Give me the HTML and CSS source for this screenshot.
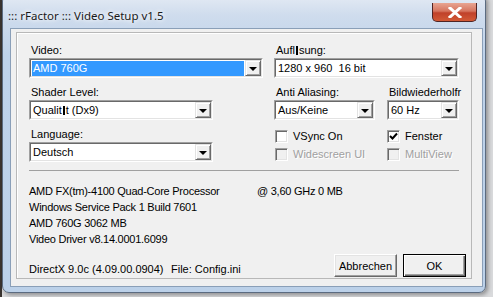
FILE: index.html
```html
<!DOCTYPE html>
<html>
<head>
    <title>rFactor Video Setup</title>
    <link rel="stylesheet" href="styles.css">
</head>
<body>
    <div class="window">
        <div class="titlebar">
            <span class="title">::: rFactor ::: Video Setup v1.5</span>
            <div class="close">
                <svg width="14" height="11" viewBox="0 0 14 11">
                    <path d="M2 1 L12 10 M12 1 L2 10" stroke="#fff" stroke-width="3" stroke-linecap="square"/>
                </svg>
            </div>
        </div>
        <div class="client">
            <div class="group">
                <div class="settings">
                    <div class="column">
                        <div class="field">
                            <div class="label">Video:</div>
                            <div class="combo">
                                <div class="combo-inner">
                                    <div class="value selected">AMD 760G</div>
                                    <div class="drop"><span class="arrow"></span></div>
                                </div>
                            </div>
                        </div>
                        <div class="field shader">
                            <div class="label">Shader Level:</div>
                            <div class="combo">
                                <div class="combo-inner">
                                    <div class="value">Qualit<span class="bad-char"></span>t (Dx9)</div>
                                    <div class="drop"><span class="arrow"></span></div>
                                </div>
                            </div>
                        </div>
                        <div class="field shader">
                            <div class="label">Language:</div>
                            <div class="combo">
                                <div class="combo-inner">
                                    <div class="value">Deutsch</div>
                                    <div class="drop"><span class="arrow"></span></div>
                                </div>
                            </div>
                        </div>
                    </div>
                    <div class="column">
                        <div class="field">
                            <div class="label">Aufl<span class="bad-char"></span>sung:</div>
                            <div class="combo">
                                <div class="combo-inner">
                                    <div class="value">1280 x 960&nbsp; 16 bit</div>
                                    <div class="drop"><span class="arrow"></span></div>
                                </div>
                            </div>
                        </div>
                        <div class="pair">
                            <div class="field aa">
                                <div class="label">Anti Aliasing:</div>
                                <div class="combo">
                                    <div class="combo-inner">
                                        <div class="value">Aus/Keine</div>
                                        <div class="drop"><span class="arrow"></span></div>
                                    </div>
                                </div>
                            </div>
                            <div class="field hz">
                                <div class="label">Bildwiederholfr</div>
                                <div class="combo">
                                    <div class="combo-inner">
                                        <div class="value">60 Hz</div>
                                        <div class="drop"><span class="arrow"></span></div>
                                    </div>
                                </div>
                            </div>
                        </div>
                        <div class="checks">
                            <div class="check"><span class="box"></span>VSync On</div>
                            <div class="check"><span class="box">
                                <svg width="9" height="9" viewBox="0 0 9 9"><path d="M1 4 L3.5 6.5 L8 1.5" stroke="#000" stroke-width="2" fill="none"/></svg>
                            </span>Fenster</div>
                            <div class="check disabled"><span class="box"></span>Widescreen UI</div>
                            <div class="check disabled"><span class="box"></span>MultiView</div>
                        </div>
                    </div>
                </div>
                <div class="separator"></div>
                <div class="info">
                    <span>AMD FX(tm)-4100 Quad-Core Processor</span><span>@ 3,60 GHz 0 MB</span>
                    <span>Windows Service Pack 1 Build 7601</span><span></span>
                    <span>AMD 760G 3062 MB</span><span></span>
                    <span>Video Driver v8.14.0001.6099</span><span></span>
                </div>
                <div class="footer">
                    <span class="dx">DirectX 9.0c (4.09.00.0904)</span>
                    <span class="file">File: Config.ini</span>
                    <div class="buttons">
                        <div class="button">Abbrechen</div>
                        <div class="button button-default"><span>OK</span></div>
                    </div>
                </div>
            </div>
        </div>
    </div>
</body>
</html>
```

FILE: styles.css
```css
body {
    margin: 0;
    height: 297px;
    overflow: hidden;
    background: linear-gradient(90deg, #3a3430 0, #3a3430 2px, #d9dadc 2px);
    font-family: 'Liberation Sans', Arial, sans-serif;
    font-size: 11px;
    color: #000;
}
.window {
    margin: -6px 0 0 2px;
    width: 484px;
    height: 299px;
    box-sizing: border-box;
    padding: 0 4px 0 7px;
    background: linear-gradient(180deg, #e4ebf4 0, #cfdced 20px, #bed2ea 60px, #bcd1e9 100%);
    border: 1px solid #5b6b80;
    border-radius: 7px;
    box-shadow: 2px 2px 4px rgba(0, 0, 0, 0.35);
}
.titlebar {
    height: 33px;
    display: flex;
    justify-content: space-between;
    align-items: flex-start;
}
.title {
    font-family: 'Noto Sans', sans-serif;
    font-size: 11.5px;
    margin-top: 13px;
    margin-left: -2px;
    color: #1a1a1a;
    text-shadow: 0 0 6px #fff, 0 0 4px #fff;
}
.close {
    width: 45px;
    height: 19px;
    margin-top: 8px;
    margin-right: 4px;
    box-sizing: border-box;
    border: 1px solid #4f2424;
    border-top: none;
    border-radius: 0 0 5px 5px;
    background: linear-gradient(180deg, #e8a592 0, #d6755f 45%, #c0412a 55%, #d25a36 100%);
    display: flex;
    justify-content: center;
    align-items: center;
}
.client {
    width: 473px;
    height: 259px;
    box-sizing: border-box;
    border: 1px solid #8a9fb8;
    background-color: #f0f0f0;
    padding: 3px 10px 7px 5px;
}
.group {
    width: 456px;
    height: 247px;
    box-sizing: border-box;
    border: 1px solid #b8b8b8;
    box-shadow: inset 1px 1px #fff;
    padding: 10px 12px 1px 12px;
}
.settings {
    display: grid;
    grid-template-columns: 234px 185px;
    column-gap: 11px;
}
.column {
    display: flex;
    flex-direction: column;
    gap: 7px;
}
.label {
    height: 15px;
    line-height: 15px;
    padding-left: 2px;
    white-space: nowrap;
}
.bad-char {
    display: inline-block;
    width: 2px;
    height: 9px;
    margin: 0 1px;
    background-color: #000;
    vertical-align: -1px;
}
.shader {
    width: 184px;
}
.combo {
    height: 20px;
    box-sizing: border-box;
    border: 1px solid;
    border-color: #a0a0a0 #fff #fff #a0a0a0;
}
.combo-inner {
    height: 100%;
    box-sizing: border-box;
    display: flex;
    border: 1px solid;
    border-color: #696969 #e3e3e3 #e3e3e3 #696969;
    background-color: #fff;
}
.value {
    flex: 1;
    padding-left: 2px;
    line-height: 16px;
    white-space: nowrap;
}
.selected {
    margin: 1px 1px 0 1px;
    padding-left: 1px;
    line-height: 15px;
    background-color: #3399ff;
    color: #fff;
}
.drop {
    width: 16px;
    height: 16px;
    box-sizing: border-box;
    border: 1px solid;
    border-color: #e3e3e3 #696969 #696969 #e3e3e3;
    box-shadow: inset 1px 1px #fff, inset -1px -1px #a0a0a0;
    background-color: #f0f0f0;
    display: flex;
    justify-content: center;
    align-items: center;
}
.arrow {
    width: 0;
    height: 0;
    margin-top: 1px;
    border-left: 4px solid transparent;
    border-right: 4px solid transparent;
    border-top: 4px solid #000;
}
.pair {
    display: flex;
    justify-content: space-between;
}
.aa {
    width: 101px;
}
.hz {
    width: 72px;
}
.checks {
    display: grid;
    grid-template-columns: 112px 1fr;
    grid-auto-rows: 18px;
}
.check {
    display: flex;
    align-items: center;
    white-space: nowrap;
}
.box {
    width: 13px;
    height: 13px;
    box-sizing: border-box;
    margin-left: 1px;
    margin-right: 5px;
    border: 1px solid;
    border-color: #a0a0a0 #fff #fff #a0a0a0;
    box-shadow: inset 1px 1px #696969, inset -1px -1px #e3e3e3;
    background-color: #fff;
    display: flex;
    justify-content: center;
    align-items: center;
}
.disabled {
    color: #a0a0a0;
    text-shadow: 1px 1px #fff;
}
.disabled .box {
    background-color: #f0f0f0;
}
.separator {
    margin-top: 7px;
    height: 1px;
    background-color: #a0a0a0;
}
.info {
    margin-top: 12px;
    display: grid;
    grid-template-columns: 228px 1fr;
    grid-auto-rows: 16px;
    line-height: 16px;
    letter-spacing: -0.25px;
}
.footer {
    margin-top: 7px;
    display: flex;
    align-items: flex-end;
    line-height: 16px;
}
.dx {
    width: 142px;
}
.file {
    flex: 1;
}
.buttons {
    display: flex;
    gap: 6px;
    margin-right: -7px;
}
.button {
    width: 63px;
    height: 23px;
    box-sizing: border-box;
    border: 1px solid;
    border-color: #fff #696969 #696969 #fff;
    box-shadow: inset -1px -1px #a0a0a0, inset 1px 1px #e3e3e3;
    background-color: #f0f0f0;
    display: flex;
    justify-content: center;
    align-items: center;
}
.button-default {
    border: 1px solid #000;
    box-shadow: inset 1px 1px #fff, inset -1px -1px #696969, inset -2px -2px #a0a0a0;
}
```
